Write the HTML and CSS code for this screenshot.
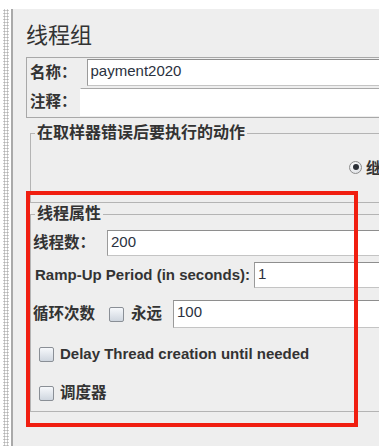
FILE: index.html
```html
<!DOCTYPE html>
<html>
<head>
    <title>线程组</title>
    <link rel="stylesheet" href="styles.css">
</head>
<body>
    <div class="frame">
        <div class="splitter"></div>
        <div class="panel">
            <h1 class="title">线程组</h1>

            <div class="namebox">
                <div class="row name-row">
                    <span class="label">名称：</span>
                    <div class="field name-field">payment2020</div>
                </div>
                <div class="row comment-row">
                    <span class="label">注释：</span>
                    <div class="field comment-field"></div>
                </div>
            </div>

            <fieldset class="group action">
                <legend>在取样器错误后要执行的动作</legend>
                <div class="radio-row">
                    <span class="radio"><span class="dot"></span></span>
                    <span class="radio-text">继续</span>
                </div>
            </fieldset>

            <fieldset class="group threads">
                <legend>线程属性</legend>
                <div class="row threads-row">
                    <span class="label">线程数：</span>
                    <div class="field threads-field">200</div>
                </div>
                <div class="row ramp-row">
                    <span class="label latin">Ramp-Up Period (in seconds):</span>
                    <div class="field ramp-field">1</div>
                </div>
                <div class="row loop-row">
                    <span class="label">循环次数</span>
                    <span class="check loop-check"></span>
                    <span class="label">永远</span>
                    <div class="field loop-field">100</div>
                </div>
                <div class="check-row delay-row">
                    <span class="check"></span>
                    <span class="label latin">Delay Thread creation until needed</span>
                </div>
                <div class="check-row sched-row">
                    <span class="check"></span>
                    <span class="label">调度器</span>
                </div>
            </fieldset>

            <!-- red annotation box drawn over the thread properties -->
            <div class="highlight"></div>
        </div>
    </div>
</body>
</html>
```

FILE: styles.css
```css
body {
    margin: 0;
    padding: 0;
    background-color: #fff;
    font-family: "Liberation Sans", "Noto Sans CJK SC", sans-serif;
    color: #333;
}

.frame {
    display: flex;
    margin-top: 9px;
    height: 437px;
}

.splitter {
    width: 6px;
    margin: 0 2px 0 3px;
    background-image: radial-gradient(circle, #b3b3b3 0.9px, transparent 1.2px);
    background-size: 3px 3px;
}

.panel {
    position: relative;
    flex: 1;
    margin-right: 4px;
    padding-left: 13px;
    background-color: #eeeeee;
    border-left: 2px solid #a9a9a9;
    overflow: hidden;
}

.title {
    margin: 12px 0 0;
    font-size: 22px;
    line-height: 30px;
    font-weight: normal;
    color: #333;
}

.row {
    display: flex;
    align-items: center;
}

.label {
    font-size: 15.5px;
    font-weight: bold;
    line-height: 20px;
    white-space: nowrap;
    color: #333;
}

.label.latin {
    font-size: 15px;
}

.field {
    flex: 1;
    box-sizing: border-box;
    background-color: #fff;
    border: 1px solid #c4c4c4;
    border-top-color: #8e8e8e;
    border-left-color: #9a9a9a;
    padding-left: 3px;
    font-size: 15px;
    line-height: 22px;
    color: #2a3140;
}

/* name and comment */
.namebox {
    margin: 6px -30px 0 0;
    padding: 1px 0 1px 3px;
    border: 1px solid #a8a8a8;
}

.name-row {
    height: 27px;
}

.name-row .field {
    height: 27px;
    margin-left: 10px;
}

.comment-row {
    height: 28px;
    margin-top: 2px;
}

.comment-row .field {
    height: 28px;
    margin-left: 3px;
    border-color: #fff;
    border-top-color: #a8a8a8;
}

/* fieldsets */
.group {
    margin: 0 -30px 0 4px;
    padding: 0 0 0 2px;
    border: 1px solid #b4b4b4;
    min-width: 0;
}

.group legend {
    margin-left: 2px;
    padding: 0 2px;
    font-size: 16px;
    font-weight: bold;
    line-height: 20px;
    color: #333;
}

.action {
    margin-top: 5px;
    padding-bottom: 25px;
}

.radio-row {
    display: flex;
    align-items: center;
    height: 20px;
    margin: 14px 0 0 316px;
    white-space: nowrap;
}

.radio {
    display: flex;
    align-items: center;
    justify-content: center;
    box-sizing: border-box;
    width: 13px;
    height: 13px;
    border: 1px solid #8d8d8d;
    border-radius: 50%;
    background: radial-gradient(circle at 40% 35%, #ffffff, #d6d9de);
}

.dot {
    width: 6px;
    height: 6px;
    border-radius: 50%;
    background-color: #2b2f36;
}

.radio-text {
    margin-left: 4px;
    font-size: 16px;
    font-weight: bold;
}

.threads {
    margin-top: 1px;
    padding-bottom: 8px;
}

.threads-row {
    margin-top: 6px;
    height: 26px;
}

.threads-row .field {
    height: 26px;
    margin-left: 12px;
}

.ramp-row {
    margin-top: 6px;
    height: 26px;
    padding-left: 2px;
}

.ramp-row .field {
    height: 26px;
    margin-left: 4px;
}

.loop-row {
    margin-top: 12px;
    height: 28px;
}

.loop-row .field {
    height: 28px;
    margin-left: 11px;
}

.check {
    display: inline-block;
    box-sizing: border-box;
    width: 15px;
    height: 15px;
    border: 1px solid #8a8f96;
    border-radius: 2px;
    background: linear-gradient(#f6f8fb, #cfd6df);
}

.loop-check {
    margin: 0 7px 0 14px;
}

.check-row {
    display: flex;
    align-items: center;
    height: 20px;
    padding-left: 6px;
}

.check-row .check {
    margin-right: 6px;
}

.delay-row {
    margin-top: 16px;
}

.sched-row {
    margin-top: 19px;
}

.highlight {
    position: absolute;
    left: 13px;
    top: 182px;
    width: 332px;
    height: 236px;
    box-sizing: border-box;
    border: 4px solid #f01e10;
}
```
